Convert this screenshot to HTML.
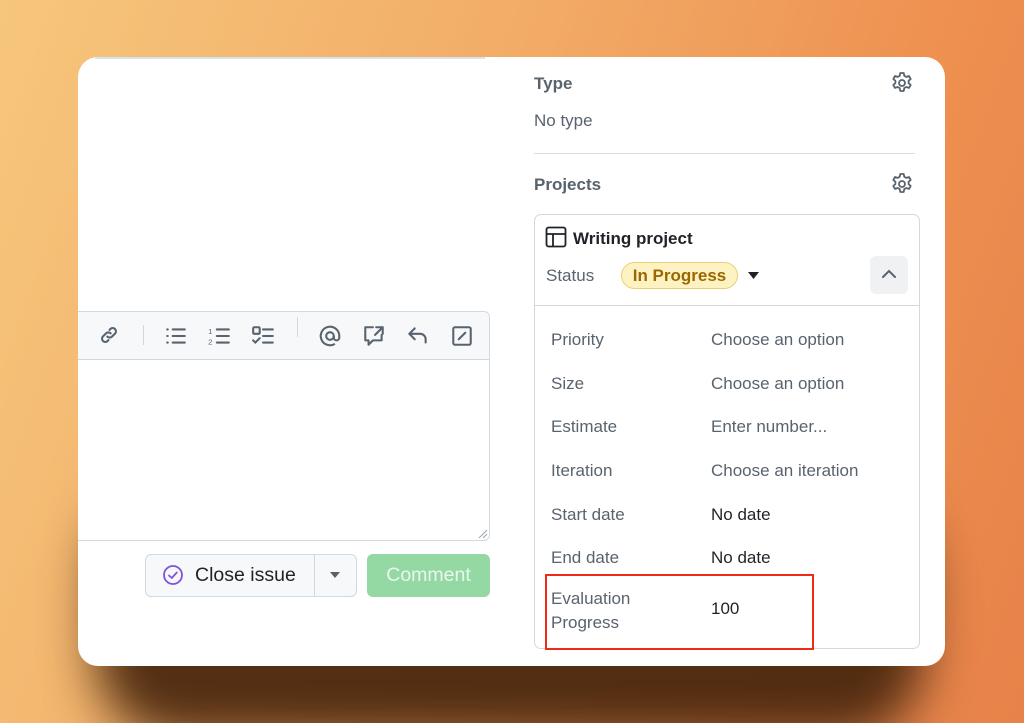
<!DOCTYPE html>
<html><head><meta charset="utf-8"><style>
*{margin:0;padding:0;box-sizing:border-box}
body{width:1024px;height:723px;overflow:hidden;position:relative;font-family:"Liberation Sans",sans-serif;
background:linear-gradient(110deg,#f6c67c 0%,#f2ad68 40%,#ee9050 75%,#e7824a 100%);}
.shadow{position:absolute;left:120px;top:460px;width:780px;height:200px;border-radius:60px;box-shadow:0 55px 50px 25px rgba(75,40,15,.95);}
.card{position:absolute;left:78px;top:57px;width:867px;height:609px;background:#fff;border-radius:20px;overflow:hidden}
.a{position:absolute;white-space:nowrap}
.h{font-weight:bold;color:#59636e;font-size:17px}
.val{color:#59636e;font-size:17px}
.dark{color:#1f2328;font-size:17px}
svg{position:absolute}
</style></head><body>
<div class="shadow"></div>
<div class="card">
<div class="a" style="left:17px;top:0;width:390px;height:2px;background:#d6e4f2"></div>
<div class="a" style="left:-10px;top:254px;width:422px;height:230px;border:1px solid #d1d9e0;border-radius:6px;background:#fff">
 <div style="height:48px;background:#f6f8fa;border-bottom:1px solid #d1d9e0;border-radius:6px 6px 0 0"></div>
</div>
<div class="a" style="left:65px;top:268px;width:1px;height:20px;background:#d1d9e0"></div>
<div class="a" style="left:219px;top:260px;width:1px;height:20px;background:#d1d9e0"></div>
<svg style="left:20px;top:267px" width="22" height="22" viewBox="0 0 20 20" fill="none" stroke="#59636e" stroke-width="1.9" stroke-linecap="round"><path d="M8.5 11.5a3 3 0 0 0 4.2 0l3-3a3 3 0 0 0-4.2-4.2l-1 1M11.5 8.5a3 3 0 0 0-4.2 0l-3 3a3 3 0 0 0 4.2 4.2l1-1"/></svg>
<svg style="left:87px;top:268px" width="22" height="22" viewBox="0 0 20 20" fill="none" stroke="#59636e" stroke-width="1.9" stroke-linecap="round"><path d="M7 4h11M7 10h11M7 16h11"/><path d="M2 4h.5M2 10h.5M2 16h.5"/></svg>
<svg style="left:129px;top:268px" width="24" height="22" viewBox="0 0 22 20" fill="none" stroke="#59636e" stroke-width="1.9" stroke-linecap="round"><path d="M9 4h11M9 10h11M9 16h11"/><text x="1" y="8" font-size="7" fill="#59636e" stroke="none">1</text><text x="1" y="18" font-size="7" fill="#59636e" stroke="none">2</text></svg>
<svg style="left:173px;top:268px" width="24" height="22" viewBox="0 0 22 20" fill="none" stroke="#59636e" stroke-width="1.9" stroke-linecap="round"><rect x="2" y="2" width="6" height="6" rx="1"/><path d="M2 14l2 2 4-4M11 4h9M11 10h9M11 16h9"/></svg>
<svg style="left:240px;top:267px" width="24" height="24" viewBox="0 0 22 22" fill="none" stroke="#59636e" stroke-width="1.9"><circle cx="11" cy="11" r="3.5"/><path d="M14.5 11v1.5a2.5 2.5 0 0 0 5 0V11a8.5 8.5 0 1 0-4 7.2"/></svg>
<svg style="left:284px;top:267px" width="24" height="24" viewBox="0 0 22 22" fill="none" stroke="#59636e" stroke-width="1.9" stroke-linecap="round" stroke-linejoin="round"><path d="M10 3H3v12h3v4l4-4h8v-5M13 3h6v6M19 3l-7 7"/></svg>
<svg style="left:328px;top:267px" width="24" height="24" viewBox="0 0 22 22" fill="none" stroke="#59636e" stroke-width="1.9" stroke-linecap="round" stroke-linejoin="round"><path d="M8 4L3 9l5 5M3 9h10a5 5 0 0 1 5 5v3"/></svg>
<svg style="left:372px;top:267px" width="24" height="24" viewBox="0 0 22 22" fill="none" stroke="#59636e" stroke-width="1.9" stroke-linecap="round"><rect x="3" y="3" width="16" height="16" rx="1.5"/><path d="M8 14l6-6"/></svg>
<svg style="left:400px;top:472px" width="10" height="10" viewBox="0 0 10 10" stroke="#9aa4ae" stroke-width="1"><path d="M1 9L9 1M5 9l4-4"/></svg>
<div class="a" style="left:67px;top:497px;width:212px;height:43px;border:1px solid #d1d9e0;border-radius:6px;background:#f6f8fa"></div>
<div class="a" style="left:236px;top:497px;width:1px;height:43px;background:#d1d9e0"></div>
<svg style="left:84px;top:507px" width="22" height="22" viewBox="0 0 22 22" fill="none" stroke="#8250df" stroke-width="1.8" stroke-linecap="round" stroke-linejoin="round"><circle cx="11" cy="11" r="9"/><path d="M7 11.5l2.8 2.5 5-5.5"/></svg>
<div class="a" style="left:117px;top:507px;font-size:19.5px;color:#1f2328">Close issue</div>
<svg style="left:252px;top:515px" width="10" height="6" viewBox="0 0 10 6"><path d="M0 0h10L5 6z" fill="#59636e"/></svg>
<div class="a" style="left:289px;top:497px;width:123px;height:43px;border-radius:6px;background:#94d8a4;color:#e9f7ec;font-size:19.5px;text-align:center;line-height:43px">Comment</div>
<div class="a h" style="left:456px;top:17px">Type</div>
<svg style="left:812px;top:14px" width="24" height="24" viewBox="0 0 24 24" fill="none" stroke="#59636e" stroke-width="1.8" stroke-linejoin="round"><circle cx="12" cy="12" r="3"/><path d="M10.3 2h3.4l.6 2.8 2 1.1 2.7-.9 1.7 2.9-2.1 1.9v2.3l2.1 1.9-1.7 2.9-2.7-.9-2 1.1-.6 2.9h-3.4l-.6-2.9-2-1.1-2.7.9-1.7-2.9 2.1-1.9v-2.3L3.3 7.9 5 5l2.7.9 2-1.1z"/></svg>
<div class="a val" style="left:456px;top:54px">No type</div>
<div class="a" style="left:456px;top:96px;width:381px;height:1px;background:#d8dee4"></div>
<div class="a h" style="left:456px;top:118px">Projects</div>
<svg style="left:812px;top:115px" width="24" height="24" viewBox="0 0 24 24" fill="none" stroke="#59636e" stroke-width="1.8" stroke-linejoin="round"><circle cx="12" cy="12" r="3"/><path d="M10.3 2h3.4l.6 2.8 2 1.1 2.7-.9 1.7 2.9-2.1 1.9v2.3l2.1 1.9-1.7 2.9-2.7-.9-2 1.1-.6 2.9h-3.4l-.6-2.9-2-1.1-2.7.9-1.7-2.9 2.1-1.9v-2.3L3.3 7.9 5 5l2.7.9 2-1.1z"/></svg>
<div class="a" style="left:456px;top:157px;width:386px;height:435px;border:1px solid #d1d9e0;border-radius:7px"></div>
<div class="a" style="left:457px;top:248px;width:384px;height:1px;background:#d1d9e0"></div>
<svg style="left:467px;top:169px" width="22" height="22" viewBox="0 0 22 22" fill="none" stroke="#1f2328" stroke-width="1.8"><rect x="1.5" y="1.5" width="19" height="19" rx="2"/><path d="M1.5 8h19M8 8v12.5"/></svg>
<div class="a" style="left:495px;top:172px;font-size:17px;font-weight:bold;color:#1f2328">Writing project</div>
<div class="a val" style="left:468px;top:209px">Status</div>
<div class="a" style="left:543px;top:205px;width:117px;height:27px;border:1px solid #e8cf6f;background:#fdf3c2;border-radius:14px;color:#9a6700;font-weight:bold;font-size:17px;text-align:center;line-height:25px">In Progress</div>
<svg style="left:670px;top:215px" width="11" height="7" viewBox="0 0 11 7"><path d="M0 0h11L5.5 7z" fill="#1f2328"/></svg>
<div class="a" style="left:792px;top:199px;width:38px;height:38px;background:#eff1f3;border-radius:6px"></div>
<svg style="left:803px;top:212px" width="16" height="10" viewBox="0 0 16 10" fill="none" stroke="#59636e" stroke-width="2" stroke-linecap="round"><path d="M2 8l6-6 6 6"/></svg>
<div class="a val" style="left:473px;top:273px">Priority</div><div class="a val" style="left:633px;top:273px">Choose an option</div>
<div class="a val" style="left:473px;top:317px">Size</div><div class="a val" style="left:633px;top:317px">Choose an option</div>
<div class="a val" style="left:473px;top:360px">Estimate</div><div class="a val" style="left:633px;top:360px">Enter number...</div>
<div class="a val" style="left:473px;top:404px">Iteration</div><div class="a val" style="left:633px;top:404px">Choose an iteration</div>
<div class="a val" style="left:473px;top:448px">Start date</div><div class="a dark" style="left:633px;top:448px">No date</div>
<div class="a val" style="left:473px;top:491px">End date</div><div class="a dark" style="left:633px;top:491px">No date</div>
<div class="a val" style="left:473px;top:530px;line-height:24px">Evaluation<br>Progress</div><div class="a dark" style="left:633px;top:542px">100</div>
<div class="a" style="left:467px;top:517px;width:269px;height:76px;border:2.5px solid #f02a14"></div>
</div>
</body></html>
